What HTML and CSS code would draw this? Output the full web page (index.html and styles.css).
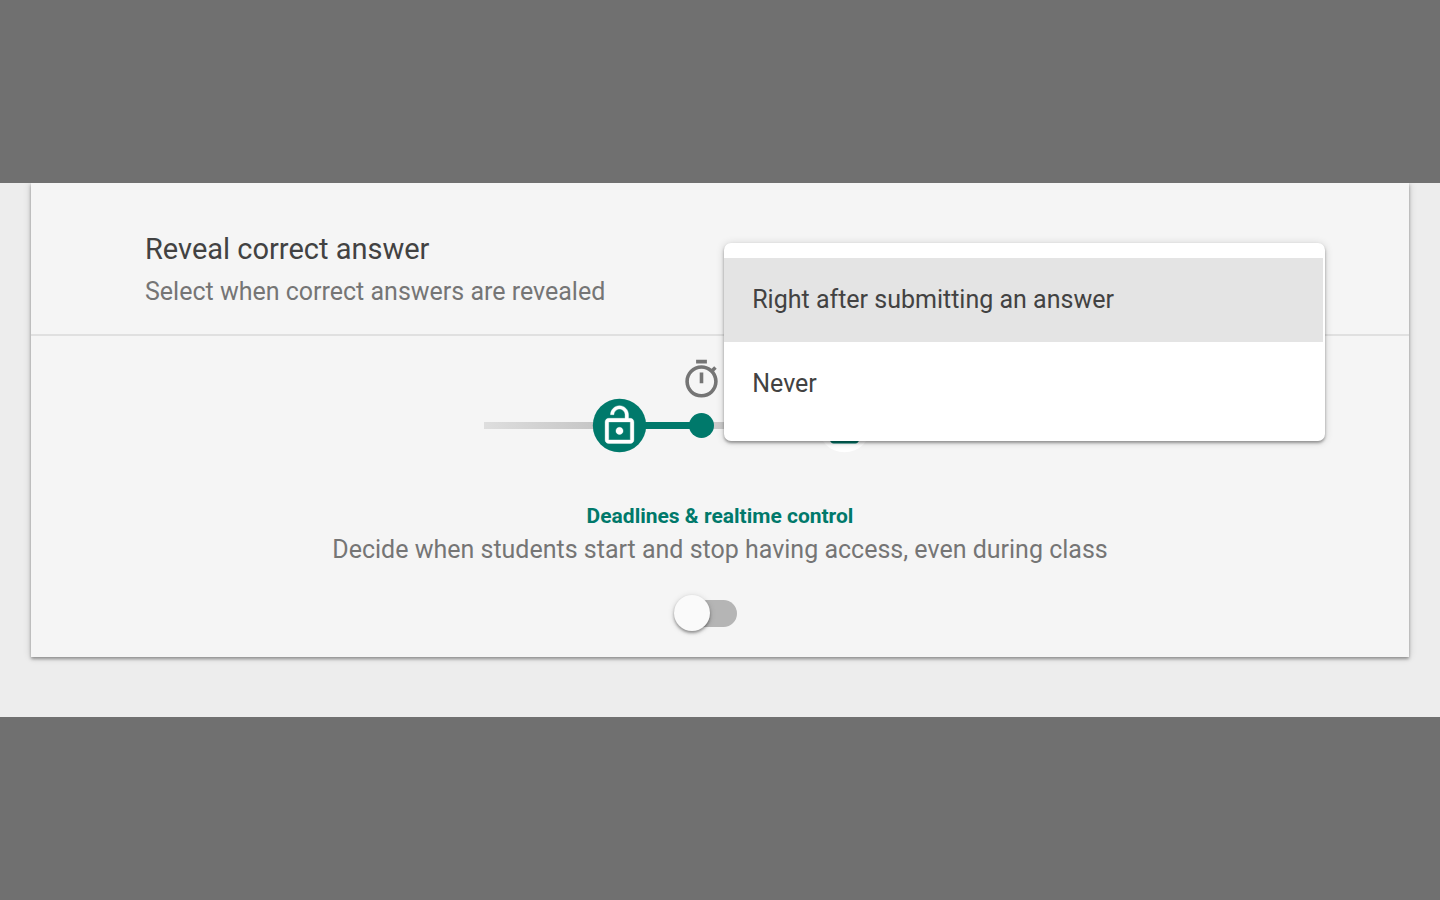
FILE: index.html
```
<!DOCTYPE html>
<html lang="en">
<head>
<meta charset="utf-8">
<meta name="viewport" content="width=device-width, initial-scale=1">
<title>Reveal correct answer</title>
<link rel="stylesheet" href="styles.css">
</head>
<body>
<main class="stage">
  <div class="card">
    <section class="setting">
      <div class="setting-text">
        <h1 class="title" id="reveal">Reveal correct answer</h1>
        <p class="text">Select when correct answers are revealed</p>
      </div>
      <div class="picker">
        <div class="menu" role="listbox" aria-labelledby="reveal">
          <button class="option selected" type="button" role="option" aria-selected="true">Right after submitting an answer</button>
          <button class="option" type="button" role="option" aria-selected="false">Never</button>
        </div>
      </div>
    </section>
    <section class="deadlines">
      <svg class="timeline" width="472" height="100" viewBox="0 0 472 100" aria-hidden="true">
        <defs>
          <linearGradient id="fade-in"><stop offset="0" stop-color="#dedede"/><stop offset="1" stop-color="#c4c4c4"/></linearGradient>
          <linearGradient id="fade-out"><stop offset="0" stop-color="#c9c9c9"/><stop offset="1" stop-color="#dedede"/></linearGradient>
        </defs>
        <rect x="0" y="66" width="120" height="7" fill="url(#fade-in)"/>
        <rect x="217" y="66" width="255" height="7" fill="url(#fade-out)"/>
        <rect x="135" y="66" width="83" height="7" fill="#00796b"/>
        <circle cx="135.5" cy="69.5" r="26.7" fill="#00796b"/>
        <circle cx="217.5" cy="69.5" r="12.5" fill="#00796b"/>
        <circle cx="360.5" cy="69.5" r="26.7" fill="#fff"/>
        <path transform="translate(113.9 47.9) scale(1.8)" fill="#fff" stroke="#fff" stroke-width=".2" d="M12 17c1.1 0 2-.9 2-2s-.9-2-2-2-2 .9-2 2 .9 2 2 2zm6-9h-1V6c0-2.76-2.24-5-5-5S7 3.24 7 6h1.9c0-1.71 1.39-3.1 3.1-3.1 1.71 0 3.1 1.39 3.1 3.1v2H6c-1.1 0-2 .9-2 2v10c0 1.1.9 2 2 2h12c1.1 0 2-.9 2-2V10c0-1.1-.9-2-2-2zm0 12H6V10h12v10z"/>
        <path transform="translate(338.9 47.9) scale(1.8)" fill="#00796b" d="M18 8h-1V6c0-2.76-2.24-5-5-5S7 3.24 7 6v2H6c-1.1 0-2 .9-2 2v10c0 1.1.9 2 2 2h12c1.1 0 2-.9 2-2V10c0-1.1-.9-2-2-2zM8.9 6c0-1.71 1.39-3.1 3.1-3.1s3.1 1.39 3.1 3.1v2H8.9V6zM18 20H6V10h12v10z"/>
        <path transform="translate(195.9 2)  scale(1.8)" fill="#757575" d="M15 1H9v2h6V1zm-4 13h2V8h-2v6zm8.03-6.61l1.42-1.42c-.43-.51-.9-.99-1.41-1.41l-1.42 1.42C16.07 4.74 14.12 4 12 4c-4.97 0-9 4.03-9 9s4.02 9 9 9 9-4.03 9-9c0-2.12-.74-4.07-1.97-5.61zM12 20c-3.87 0-7-3.13-7-7s3.13-7 7-7 7 3.13 7 7-3.13 7-7 7z"/>
      </svg>
      <h2 class="subtitle" id="deadlines">Deadlines &amp; realtime control</h2>
      <p class="text">Decide when students start and stop having access, even during class</p>
      <input class="switch" type="checkbox" role="switch" aria-labelledby="deadlines">
    </section>
  </div>
</main>
</body>
</html>
```
FILE: styles.css
```
* {
  box-sizing: border-box;
}

body {
  margin: 0;
  min-height: 100vh;
  display: flex;
  flex-direction: column;
  justify-content: center;
  background: #707070;
  font-family: Roboto, sans-serif;
  color: #424242;
}

h1, h2, p {
  margin: 0;
}

.stage {
  padding: 0 31px 60px;
  background: #ededed;
  overflow: hidden;
}

.card {
  background: #f5f5f5;
  box-shadow: 0 2px 3px rgba(0, 0, 0, 0.35), 0 0 8px rgba(0, 0, 0, 0.16);
}

.setting {
  display: flex;
  justify-content: space-between;
  padding: 46px 84px 24px 114px;
  border-bottom: 2px solid #e0e0e0;
}

.title {
  font-size: 29px;
  line-height: 40px;
  font-weight: 400;
}

.text {
  font-size: 25px;
  line-height: 36px;
  color: #757575;
}

.setting .text {
  margin-top: 5px;
}

.picker {
  position: relative;
  width: 51%;
}

.menu {
  position: absolute;
  top: 14px;
  left: 1px;
  right: 0;
  z-index: 1;
  padding: 15px 2px 15px 0;
  border-radius: 7px;
  background: #fff;
  box-shadow: 0 2px 3px rgba(0, 0, 0, 0.35), 0 1px 8px rgba(0, 0, 0, 0.16);
}

.option {
  display: block;
  width: 100%;
  padding: 24px 28px;
  border: 0;
  background: transparent;
  color: #424242;
  font: inherit;
  font-size: 25px;
  line-height: 36px;
  text-align: left;
}

.option.selected {
  background: #e4e4e4;
}

.deadlines {
  display: flex;
  flex-direction: column;
  align-items: center;
  padding: 20px 24px 26px;
  text-align: center;
}

.timeline {
  display: block;
  max-width: 100%;
}

.subtitle {
  margin-top: 44px;
  font-size: 21px;
  line-height: 32px;
  font-weight: 700;
  color: #00796b;
}

.switch {
  appearance: none;
  position: relative;
  width: 61px;
  height: 27px;
  margin: 32px 28px 4px 0;
  border-radius: 14px;
  background: #b5b5b5;
}

.switch::before {
  content: "";
  position: absolute;
  top: -5px;
  left: -2px;
  width: 36px;
  height: 36px;
  border-radius: 50%;
  background: #fafafa;
  box-shadow: 0 2px 3px rgba(0, 0, 0, 0.35), 0 1px 6px rgba(0, 0, 0, 0.15);
}
```
